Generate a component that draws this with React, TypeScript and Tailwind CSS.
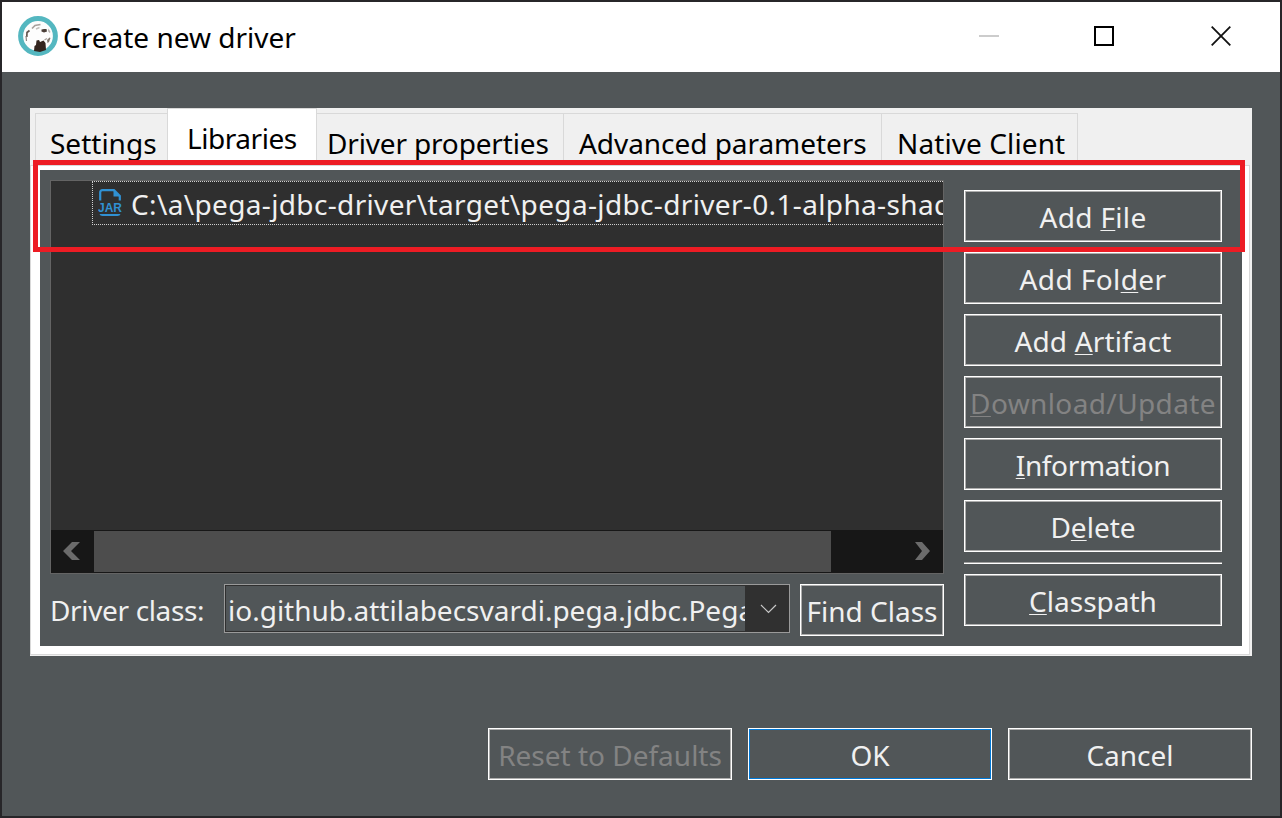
import type { ReactNode } from "react";

function Logo() {
  return (
    <svg width="40" height="40" viewBox="0 0 40 40" className="mb-[2px] shrink-0">
      <circle cx="20" cy="20" r="17.4" fill="#fdfdfd" stroke="#54b7c0" strokeWidth="5" />
      <path d="M16 35 L16.500 30 L18 29 L18.500 24.500 L21 24 L22 26 L25.500 24.500 L27.500 27 L28 34 L22 36 Z" fill="#33251f" />
      <path d="M23.500 13.500 L26 13 L28.500 13 L29 15.500 L26 16.500 L23.500 15.500 Z" fill="#4b3f39" />
      <path d="M30.500 12.500 L32.500 16 L31.500 17 L30 15 Z" fill="#b5afac" />
      <path d="M29 24 L31.500 21.500 L32.500 22 L31 26 L29.500 27 Z" fill="#83796f" />
      <path d="M26.500 24 L29 22.500" stroke="#a8a19d" strokeWidth="1.300" />
      <path d="M14 12.500 L17 9.500 L22.500 8.500" stroke="#a8a19d" strokeWidth="1.700" fill="none" />
      <path d="M18 13 L21.500 11.500" stroke="#c4bfbc" strokeWidth="1.500" />
      <path d="M11.500 14.500 L9 16.500 L8.800 21" stroke="#62564f" strokeWidth="1.700" fill="none" />
      <path d="M8 20 L8.500 25" stroke="#8d8580" strokeWidth="1.200" />
    </svg>
  );
}

function JarIcon() {
  return (
    <svg width="24" height="29" viewBox="0 0 24 29" className="mb-[2px] shrink-0">
      <path d="M2.200 12.500 V4.500 Q2.200 2.200 4.500 2.200 H16 L21.800 8 V12.500" fill="none" stroke="#3091d3" strokeWidth="2.200" />
      <path d="M15.500 1.500 L22.500 8.500 H15.500 Z" fill="#3091d3" />
      <text x="0" y="24" textLength="24" lengthAdjust="spacingAndGlyphs" fill="#3091d3" fontFamily="Liberation Sans" fontWeight="700" fontSize="13">JAR</text>
      <path d="M1.500 26 H22.500 Q22 28 19.500 28 H4.500 Q2 28 1.500 26 Z" fill="#3091d3" />
    </svg>
  );
}

function Key({ children }: { children: ReactNode }) {
  return <span className="underline decoration-1 underline-offset-[2px] [text-decoration-skip-ink:none]">{children}</span>;
}

function Button({ className = "", disabled = false, primary = false, children }: { className?: string; disabled?: boolean; primary?: boolean; children: ReactNode }) {
  return (
    <button
      className={`h-[52px] shrink-0 border border-white p-0 ${disabled ? "text-[#838383]" : "text-[#f0f0f0]"} ${className}`}
    >
      <span className={`flex h-full items-center justify-center border pt-px whitespace-nowrap ${primary ? "border-[#0078d7]" : "border-[#adadad]"}`}>
        <span>{children}</span>
      </span>
    </button>
  );
}

export default function App() {
  return (
    <div className="flex h-[818px] w-[1282px] flex-col overflow-hidden border-2 border-[#272629] bg-[#515658] font-['Noto_Sans','Open_Sans',sans-serif] text-[28px] leading-[40px]">
      <header className="flex h-[70px] shrink-0 items-center bg-white pl-4 text-black">
        <Logo />
        <h1 className="ml-[5px] pb-px">Create new driver</h1>
        <div className="mb-[2px] ml-auto flex items-center">
          <svg width="20" height="20" viewBox="0 0 20 20"><path d="M0 10 H20" stroke="#cccccc" strokeWidth="2" /></svg>
          <svg className="ml-[95px]" width="20" height="20" viewBox="0 0 20 20"><rect x="1" y="1" width="18" height="18" fill="none" stroke="#000" strokeWidth="2" /></svg>
          <svg className="mr-[49px] ml-[97px]" width="20" height="20" viewBox="0 0 20 20"><path d="M0.700 0.700 L19.300 19.300 M19.300 0.700 L0.700 19.300" stroke="#111" strokeWidth="1.800" /></svg>
        </div>
      </header>

      <main className="relative mt-9 ml-7 flex h-[548px] w-[1222px] shrink-0 flex-col bg-[#f0f0f0]">
        <nav className="flex h-[57px] shrink-0 items-end pl-[5px] whitespace-nowrap text-black">
          <div className="h-[52px] w-[132px] border-t border-l border-[#d9d9d9] pt-[9px] pl-[14px]">Settings</div>
          <div className="h-[57px] w-[150px] border-x border-t border-[#d9d9d9] bg-white pt-[9px] pl-[19px] tracking-[-0.45px]">Libraries</div>
          <div className="h-[52px] w-[246px] border-t border-[#d9d9d9] pt-[9px] pl-[10px] tracking-[-0.16px]">Driver properties</div>
          <div className="h-[52px] w-[318px] border-t border-l border-[#d9d9d9] pt-[9px] pl-[15px] tracking-[-0.05px]">Advanced parameters</div>
          <div className="h-[52px] w-[197px] border-x border-t border-[#d9d9d9] pt-[9px] pl-[15px] tracking-[0.1px]">Native Client</div>
        </nav>
        <div className="mr-[2px] mb-[1px] min-h-0 flex-1 border border-[#d9d9d9] bg-white pt-1 pr-[7px] pb-2 pl-[9px]">
          <div className="flex h-[476px] w-[1202px] bg-[#515658] pt-[10px] pl-[10px] text-[#f0f0f0]">
            <section className="w-[894px]">
              <div className="flex h-[394px] flex-col border border-[#646464] bg-[#2f2f2f]">
                <div className="ml-[41px] flex h-[44px] items-center overflow-hidden border-y border-l border-dotted border-[#d0d0d0] pl-[5px] whitespace-nowrap">
                  <JarIcon />
                  <span className="ml-[9px] pt-[2px] tracking-[0.35px]">C:\a\pega-jdbc-driver\target\pega-jdbc-driver-0.1-alpha-shad</span>
                </div>
                <div className="mt-auto flex h-[43px] bg-[#171717] py-px">
                  <div className="flex w-[43px] items-center pb-px pl-3">
                    <svg width="17" height="18" viewBox="0 0 17 18"><path d="M9 0 H17 L8 9 L17 18 H9 L0 9 Z" fill="#6b6b6b" /></svg>
                  </div>
                  <div className="w-[737px] bg-[#4d4d4d]" />
                  <div className="flex flex-1 items-center justify-end pr-[13px] pb-px">
                    <svg width="15" height="18" viewBox="0 0 15 18"><path d="M0 0 H7 L15 9 L7 18 H0 L7 9 Z" fill="#6b6b6b" /></svg>
                  </div>
                </div>
              </div>
              <div className="mt-[10px] flex items-start">
                <span className="w-[174px] pt-[6px] tracking-[-0.35px] whitespace-nowrap">Driver class:</span>
                <div className="h-[49px] w-[566px] border border-[#9a9a9a]">
                  <div className="flex h-full border border-[#303030]">
                    <span className="w-[519px] overflow-hidden pt-[4px] pl-[2px] whitespace-nowrap">io.github.attilabecsvardi.pega.jdbc.Pega</span>
                    <span className="flex flex-1 items-center justify-center bg-[#303030] pl-[3px]">
                      <svg width="17" height="10" viewBox="0 0 17 10"><path d="M1 1 L8.500 8.500 L16 1" fill="none" stroke="#c8c8c8" strokeWidth="1.200" /></svg>
                    </span>
                  </div>
                </div>
                <Button className="ml-[10px] w-[144px]">Find Class</Button>
              </div>
            </section>
            <aside className="ml-5 flex w-[258px] flex-col gap-[10px] pt-[10px]">
              <Button className="tracking-[0.35px]">Add <Key>F</Key>ile</Button>
              <Button className="tracking-[0.4px]">Add Fol<Key>d</Key>er</Button>
              <Button className="tracking-[0.15px]">Add <Key>A</Key>rtifact</Button>
              <Button className="tracking-[0.38px]" disabled><Key>D</Key>ownload/Update</Button>
              <Button className="tracking-[-0.35px]"><Key>I</Key>nformation</Button>
              <Button>D<Key>e</Key>lete</Button>
              <div className="h-[2px] border-t border-b border-t-[#a0a0a0] border-b-white" />
              <Button><Key>C</Key>lasspath</Button>
            </aside>
          </div>
        </div>
        <div className="pointer-events-none absolute top-[52px] left-[3px] h-[92px] w-[1212px] border-[5px] border-[#ed1c24]" />
      </main>

      <footer className="mt-[72px] mr-7 flex justify-end gap-4">
        <Button className="w-[244px]" disabled>Reset to Defaults</Button>
        <Button className="w-[244px]" primary>OK</Button>
        <Button className="w-[244px]">Cancel</Button>
      </footer>
    </div>
  );
}
